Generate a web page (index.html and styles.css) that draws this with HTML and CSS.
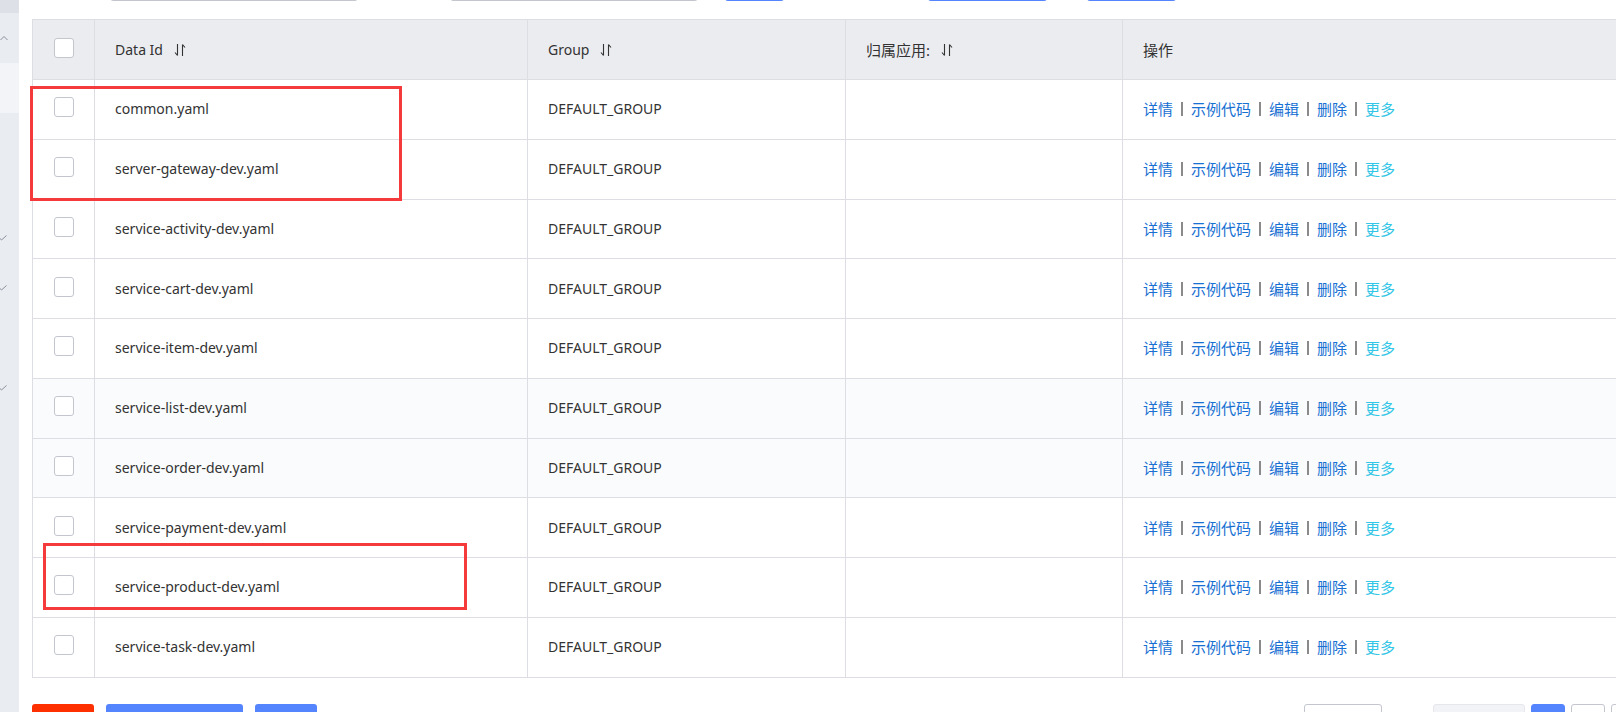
FILE: index.html
```html
<!DOCTYPE html>
<html lang="zh-CN">
<head>
<meta charset="utf-8">
<title>配置列表</title>
<link rel="stylesheet" href="styles.css">
</head>
<body>
<div class="page">
  <aside class="sidebar">
    <div class="sb-top"></div>
    <div class="sb-item"><svg class="sb-caret" width="8" height="6" viewBox="0 0 8 6"><path d="M0.5 5L4 1.5L7.5 5" fill="none" stroke="#8a8f99" stroke-width="1"/></svg></div>
    <div class="sb-item active"></div>
    <div class="sb-item"></div>
    <div class="sb-item"></div>
    <div class="sb-item"><svg class="sb-check" width="8" height="6" viewBox="0 0 8 6"><path d="M0 2.5L2.5 5L7.5 0.5" fill="none" stroke="#8a8f99" stroke-width="1"/></svg></div>
    <div class="sb-item"><svg class="sb-check" width="8" height="6" viewBox="0 0 8 6"><path d="M0 2.5L2.5 5L7.5 0.5" fill="none" stroke="#8a8f99" stroke-width="1"/></svg></div>
    <div class="sb-item"></div>
    <div class="sb-item"><svg class="sb-check" width="8" height="6" viewBox="0 0 8 6"><path d="M0 2.5L2.5 5L7.5 0.5" fill="none" stroke="#8a8f99" stroke-width="1"/></svg></div>
  </aside>

  <main class="main">
    <div class="toolbar">
      <div class="input input-a"></div>
      <div class="input input-b"></div>
      <div class="tbtn tbtn-a"></div>
      <div class="tbtn tbtn-b"></div>
      <div class="tbtn tbtn-c"></div>
    </div>

    <div class="table">
      <div class="row head">
        <div class="cell cb"><span class="checkbox"></span></div>
        <div class="cell">Data Id<svg class="sort" width="12" height="14" viewBox="0 0 12 14"><path d="M3.5 1V12.5M3.5 12.5L1 9.5M8.5 13V1.5M8.5 1.5L11 4.5" fill="none" stroke="#333" stroke-width="1.1"/></svg></div>
        <div class="cell">Group<svg class="sort" width="12" height="14" viewBox="0 0 12 14"><path d="M3.5 1V12.5M3.5 12.5L1 9.5M8.5 13V1.5M8.5 1.5L11 4.5" fill="none" stroke="#333" stroke-width="1.1"/></svg></div>
        <div class="cell cjk">归属应用:<svg class="sort" width="12" height="14" viewBox="0 0 12 14"><path d="M3.5 1V12.5M3.5 12.5L1 9.5M8.5 13V1.5M8.5 1.5L11 4.5" fill="none" stroke="#333" stroke-width="1.1"/></svg></div>
        <div class="cell cjk">操作</div>
      </div>

      <div class="row">
        <div class="cell cb"><span class="checkbox"></span></div>
        <div class="cell">common.yaml</div>
        <div class="cell">DEFAULT_GROUP</div>
        <div class="cell"></div>
        <div class="cell ops"><a>详情</a><i class="sep"></i><a>示例代码</a><i class="sep"></i><a>编辑</a><i class="sep"></i><a>删除</a><i class="sep"></i><a class="more">更多</a></div>
      </div>
      <div class="row">
        <div class="cell cb"><span class="checkbox"></span></div>
        <div class="cell">server-gateway-dev.yaml</div>
        <div class="cell">DEFAULT_GROUP</div>
        <div class="cell"></div>
        <div class="cell ops"><a>详情</a><i class="sep"></i><a>示例代码</a><i class="sep"></i><a>编辑</a><i class="sep"></i><a>删除</a><i class="sep"></i><a class="more">更多</a></div>
      </div>
      <div class="row">
        <div class="cell cb"><span class="checkbox"></span></div>
        <div class="cell">service-activity-dev.yaml</div>
        <div class="cell">DEFAULT_GROUP</div>
        <div class="cell"></div>
        <div class="cell ops"><a>详情</a><i class="sep"></i><a>示例代码</a><i class="sep"></i><a>编辑</a><i class="sep"></i><a>删除</a><i class="sep"></i><a class="more">更多</a></div>
      </div>
      <div class="row">
        <div class="cell cb"><span class="checkbox"></span></div>
        <div class="cell">service-cart-dev.yaml</div>
        <div class="cell">DEFAULT_GROUP</div>
        <div class="cell"></div>
        <div class="cell ops"><a>详情</a><i class="sep"></i><a>示例代码</a><i class="sep"></i><a>编辑</a><i class="sep"></i><a>删除</a><i class="sep"></i><a class="more">更多</a></div>
      </div>
      <div class="row">
        <div class="cell cb"><span class="checkbox"></span></div>
        <div class="cell">service-item-dev.yaml</div>
        <div class="cell">DEFAULT_GROUP</div>
        <div class="cell"></div>
        <div class="cell ops"><a>详情</a><i class="sep"></i><a>示例代码</a><i class="sep"></i><a>编辑</a><i class="sep"></i><a>删除</a><i class="sep"></i><a class="more">更多</a></div>
      </div>
      <div class="row tint">
        <div class="cell cb"><span class="checkbox"></span></div>
        <div class="cell">service-list-dev.yaml</div>
        <div class="cell">DEFAULT_GROUP</div>
        <div class="cell"></div>
        <div class="cell ops"><a>详情</a><i class="sep"></i><a>示例代码</a><i class="sep"></i><a>编辑</a><i class="sep"></i><a>删除</a><i class="sep"></i><a class="more">更多</a></div>
      </div>
      <div class="row tint">
        <div class="cell cb"><span class="checkbox"></span></div>
        <div class="cell">service-order-dev.yaml</div>
        <div class="cell">DEFAULT_GROUP</div>
        <div class="cell"></div>
        <div class="cell ops"><a>详情</a><i class="sep"></i><a>示例代码</a><i class="sep"></i><a>编辑</a><i class="sep"></i><a>删除</a><i class="sep"></i><a class="more">更多</a></div>
      </div>
      <div class="row">
        <div class="cell cb"><span class="checkbox"></span></div>
        <div class="cell">service-payment-dev.yaml</div>
        <div class="cell">DEFAULT_GROUP</div>
        <div class="cell"></div>
        <div class="cell ops"><a>详情</a><i class="sep"></i><a>示例代码</a><i class="sep"></i><a>编辑</a><i class="sep"></i><a>删除</a><i class="sep"></i><a class="more">更多</a></div>
      </div>
      <div class="row">
        <div class="cell cb"><span class="checkbox"></span></div>
        <div class="cell">service-product-dev.yaml</div>
        <div class="cell">DEFAULT_GROUP</div>
        <div class="cell"></div>
        <div class="cell ops"><a>详情</a><i class="sep"></i><a>示例代码</a><i class="sep"></i><a>编辑</a><i class="sep"></i><a>删除</a><i class="sep"></i><a class="more">更多</a></div>
      </div>
      <div class="row">
        <div class="cell cb"><span class="checkbox"></span></div>
        <div class="cell">service-task-dev.yaml</div>
        <div class="cell">DEFAULT_GROUP</div>
        <div class="cell"></div>
        <div class="cell ops"><a>详情</a><i class="sep"></i><a>示例代码</a><i class="sep"></i><a>编辑</a><i class="sep"></i><a>删除</a><i class="sep"></i><a class="more">更多</a></div>
      </div>
    </div>

    <div class="footer">
      <div class="actions">
        <div class="fbtn danger w62"></div>
        <div class="fbtn primary w137"></div>
        <div class="fbtn primary w62"></div>
      </div>
      <div class="pager">
        <div class="pg select"></div>
        <div class="pg prev"></div>
        <div class="pg num current"></div>
        <div class="pg num"></div>
        <div class="pg next"></div>
      </div>
    </div>
  </main>
</div>

<div class="mark mark-top"></div>
<div class="mark mark-bottom"></div>
</body>
</html>
```

FILE: styles.css
```css
* {
  box-sizing: border-box;
  margin: 0;
  padding: 0;
}

html,
body {
  width: 1616px;
  height: 712px;
  overflow: hidden;
  background: #ffffff;
}

body {
  font-family: "Noto Sans", "Noto Sans CJK SC", sans-serif;
  font-size: 14px;
  color: #333333;
  position: relative;
}

.page {
  display: flex;
  height: 712px;
  align-items: flex-start;
}

/* ---------- sidebar ---------- */
.sidebar {
  flex: none;
  width: 19px;
  height: 712px;
  background: #e9ecf1;
  display: flex;
  flex-direction: column;
}

.sb-top {
  flex: none;
  height: 13px;
  background: #dde1e7;
}

.sb-item {
  flex: none;
  height: 50px;
  display: flex;
  align-items: center;
}

.sb-item.active {
  background: #f3f4f7;
}

.sb-check {
  margin-left: -1px;
}

/* ---------- main ---------- */
.main {
  flex: none;
  width: 1671px;
  margin-left: 13px;
  display: flex;
  flex-direction: column;
}

.main > * {
  flex: none;
}

.toolbar {
  display: flex;
  height: 32px;
  margin-top: -31px;
}

.input {
  width: 248px;
  border: 1px solid #c4c6cf;
  border-radius: 3px;
  background: #fff;
}

.input-a {
  margin-left: 78px;
}

.input-b {
  margin-left: 92px;
}

.tbtn {
  background: #5584ff;
  border-radius: 3px;
}

.tbtn-a {
  width: 59px;
  margin-left: 27px;
}

.tbtn-b {
  width: 119px;
  margin-left: 144px;
}

.tbtn-c {
  width: 89px;
  margin-left: 40px;
}

/* ---------- table ---------- */
.table {
  margin-top: 18px;
  border-top: 1px solid #dcdee3;
  border-left: 1px solid #dcdee3;
}

.row {
  display: grid;
  grid-template-columns: 61px 433px 318px 277px 1fr;
  height: 59.75px;
  border-bottom: 1px solid #dcdee3;
  background: #fff;
}

.row.head {
  height: 60px;
  background: #ebecf0;
}

.row.tint {
  background: #fafbfc;
}

.cell {
  display: flex;
  align-items: center;
  padding-left: 20px;
  border-left: 1px solid #dcdee3;
  white-space: nowrap;
  line-height: 20px;
}

.cell.cb {
  border-left: none;
  padding-left: 0;
  justify-content: center;
}

.cell.cjk,
.cell.ops {
  font-size: 15px;
}

.checkbox {
  display: block;
  width: 20px;
  height: 20px;
  border: 1px solid #c4c6cf;
  border-radius: 3px;
  background: #fff;
  margin-bottom: 4px;
}

.sort {
  margin-left: 11px;
  flex: none;
}

.ops a {
  color: #1770d2;
  text-decoration: none;
}

.ops a.more {
  color: #33c6e6;
}

.sep {
  display: inline-block;
  width: 2px;
  height: 14px;
  background: #8a8a8a;
  margin: 0 8px;
}

/* ---------- footer ---------- */
.footer {
  display: flex;
  justify-content: space-between;
  margin-top: 26px;
}

.actions,
.pager {
  display: flex;
}

.fbtn {
  height: 32px;
  border-radius: 3px;
}

.fbtn + .fbtn {
  margin-left: 12px;
}

.fbtn.danger {
  background: #ff3000;
}

.fbtn.primary {
  background: #5584ff;
}

.w62 {
  width: 62px;
}

.w137 {
  width: 137px;
}

.pg {
  height: 32px;
  border-radius: 3px;
  border: 1px solid #c4c6cf;
  background: #fff;
}

.pg.select {
  width: 78px;
}

.pg.prev {
  width: 92px;
  margin-left: 51px;
  background: #f2f3f7;
  border-color: #e6e7eb;
}

.pg.num {
  width: 34px;
  margin-left: 6px;
}

.pg.num.current {
  background: #5584ff;
  border-color: #5584ff;
}

.pg.next {
  width: 92px;
  margin-left: 6px;
}

/* ---------- red annotation boxes (overlay) ---------- */
.mark {
  position: absolute;
  border: 3px solid #f43a3a;
  pointer-events: none;
}

.mark-top {
  left: 30px;
  top: 86px;
  width: 372px;
  height: 115px;
}

.mark-bottom {
  left: 43px;
  top: 543px;
  width: 424px;
  height: 67px;
}
```
